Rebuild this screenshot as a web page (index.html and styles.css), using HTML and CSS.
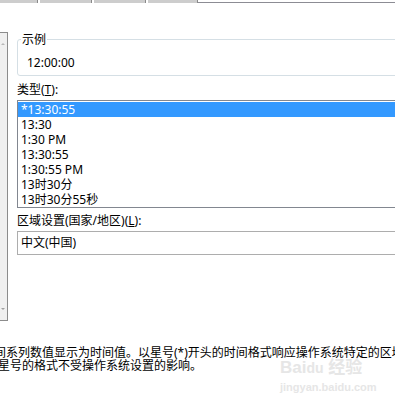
FILE: index.html
```html
<!DOCTYPE html>
<html lang="zh-CN">
<head>
    <meta charset="UTF-8">
    <title>设置单元格格式 - 时间</title>
    <link rel="stylesheet" href="styles.css">
</head>
<body>
    <!-- tab strip, cut at the top edge -->
    <div class="tabs">
        <span class="tab t1"></span>
        <span class="tab t2"></span>
        <span class="tab t3"></span>
        <span class="tab t4"></span>
        <span class="tab-rest"></span>
    </div>

    <div class="main">
        <div class="side">
            <span class="arrow up"></span>
            <span class="arrow down"></span>
        </div>
        <div class="panel">
            <fieldset class="sample">
                <legend>示例</legend>
                <div class="sample-value">12:00:00</div>
            </fieldset>

            <div class="label">类型(<u>T</u>):</div>
            <div class="listbox">
                <div class="row selected">*13:30:55</div>
                <div class="row">13:30</div>
                <div class="row">1:30 PM</div>
                <div class="row">13:30:55</div>
                <div class="row">1:30:55 PM</div>
                <div class="row">13时30分</div>
                <div class="row">13时30分55秒</div>
            </div>

            <div class="label region">区域设置(国家/地区)(<u>L</u>):</div>
            <div class="combo">中文(中国)</div>
        </div>
    </div>

    <div class="desc">
        <div class="desc-line l1">间系列数值显示为时间值。以星号(*)开头的时间格式响应操作系统特定的区域日期和时间设置的更改。</div>
        <div class="desc-line l2">星号的格式不受操作系统设置的影响。</div>
    </div>

    <div class="watermark">
        <div class="wm-logo">Bai<span class="wm-du">du</span> 经验</div>
        <div class="wm-url">jingyan.baidu.com</div>
    </div>
</body>
</html>
```

FILE: styles.css
```css
body {
    margin: 0;
    width: 395px;
    height: 400px;
    overflow: hidden;
    position: relative;
    background: #fff;
    color: #000;
    font-family: "Noto Sans", "Noto Sans CJK SC", sans-serif;
    font-size: 12px;
}
.tabs {
    display: flex;
    height: 3px;
}
.tab {
    height: 3px;
    background-color: #cdcdcd;
    border-right: 1px solid #8a8a8a;
    margin-right: 2px;
}
.t1 { width: 37px; }
.t2 { width: 51px; }
.t3 { width: 51px; }
.t4 { width: 49px; margin-right: 0; }
.tab-rest {
    flex: 1;
    height: 2px;
    border-bottom: 1px solid #8c8c94;
}
.main {
    display: flex;
    align-items: flex-start;
}
.side {
    width: 6px;
    height: 267px;
    margin-top: 29px;
    background-color: #f0f0f0;
    border: 1px solid #8c8c8c;
    border-left: none;
    display: flex;
    flex-direction: column;
    justify-content: space-between;
    padding: 10px 0 10px 1px;
}
.arrow {
    width: 0;
    height: 0;
    border-left: 2px solid transparent;
    border-right: 2px solid transparent;
}
.arrow.up {
    border-bottom: 2px solid #b8b8b8;
}
.arrow.down {
    border-top: 2px solid #a0a0a0;
}
.panel {
    flex: 1;
    margin-left: 9px;
    margin-right: -30px;
}
.sample {
    margin: 29px 0 0;
    padding: 0 0 5px 3px;
    border: 1px solid #d5dfe5;
    border-radius: 3px;
}
.sample legend {
    padding: 0 1px;
    line-height: 15px;
}
.sample-value {
    margin-top: 8px;
    padding-left: 6px;
    line-height: 15px;
}
.label {
    margin-top: 6px;
    line-height: 15px;
}
.label u {
    text-decoration: underline;
    text-underline-offset: 1px;
}
.listbox {
    margin-top: 3px;
    border: 1px solid #828790;
    padding-top: 1px;
}
.row {
    height: 15px;
    line-height: 15px;
    padding-left: 3px;
}
.row.selected {
    background-color: #3399ff;
    color: #fff;
}
.label.region {
    margin-top: 5px;
}
.combo {
    margin-top: 3px;
    height: 22px;
    line-height: 22px;
    padding-left: 3px;
    border: 1px solid #adadad;
}
.desc {
    margin-top: 25px;
}
.desc-line {
    white-space: nowrap;
    line-height: 13px;
}
.desc-line.l1 {
    margin-left: -6px;
}
.desc-line.l2 {
    margin-left: -2px;
}
.watermark {
    position: absolute;
    left: 280px;
    top: 360px;
    color: #e6e6e6;
}
.wm-logo {
    font-family: "Liberation Sans", "Noto Sans CJK SC", sans-serif;
    font-size: 17px;
    font-weight: bold;
    line-height: 16px;
}
.wm-du {
    font-size: 14px;
}
.wm-url {
    font-family: "Liberation Sans", sans-serif;
    font-size: 11px;
    font-weight: bold;
    line-height: 12px;
    margin-top: 5px;
}
```
